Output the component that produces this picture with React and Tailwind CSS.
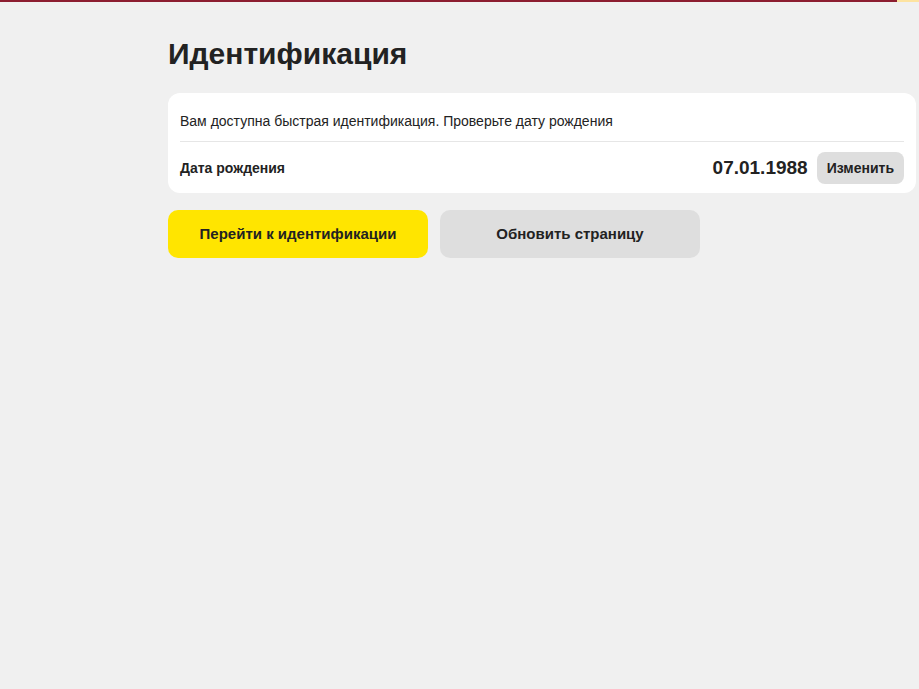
export default function App() {
  return (
    <div className="min-h-[689px] bg-[#f0f0f0] font-['Liberation_Sans',Arial,sans-serif] text-[#222]">
      {/* progress */}
      <div className="flex h-[2px] w-full">
        <div className="h-full flex-1 bg-[#8c1d30]" />
        <div className="h-full w-[22px] bg-[#fde3a0]" />
      </div>

      <div className="pl-[168px] pr-[3px] pt-[34px]">
        <h1 className="text-[30px] font-bold leading-[36px]">Идентификация</h1>

        <div className="mt-[21px] rounded-[12px] bg-white px-3">
          <p className="border-b border-[#e6e6e6] pt-[18px] pb-[10px] text-[14px] leading-5">
            Вам доступна быстрая идентификация. Проверьте дату рождения
          </p>
          <div className="flex items-center py-[10px] pb-[9px]">
            <span className="text-[14px] font-bold">Дата рождения</span>
            <span className="ml-auto text-[19px] font-bold">07.01.1988</span>
            <button className="ml-[9px] h-8 rounded-[8px] bg-[#dedede] px-[10px] text-[14px] font-bold">
              Изменить
            </button>
          </div>
        </div>

        <div className="mt-[17px] flex gap-3">
          <button className="h-12 w-[260px] rounded-[10px] bg-[#ffe500] text-[15px] font-bold">
            Перейти к идентификации
          </button>
          <button className="h-12 w-[260px] rounded-[10px] bg-[#dedede] text-[15px] font-bold">
            Обновить страницу
          </button>
        </div>
      </div>
    </div>
  )
}
